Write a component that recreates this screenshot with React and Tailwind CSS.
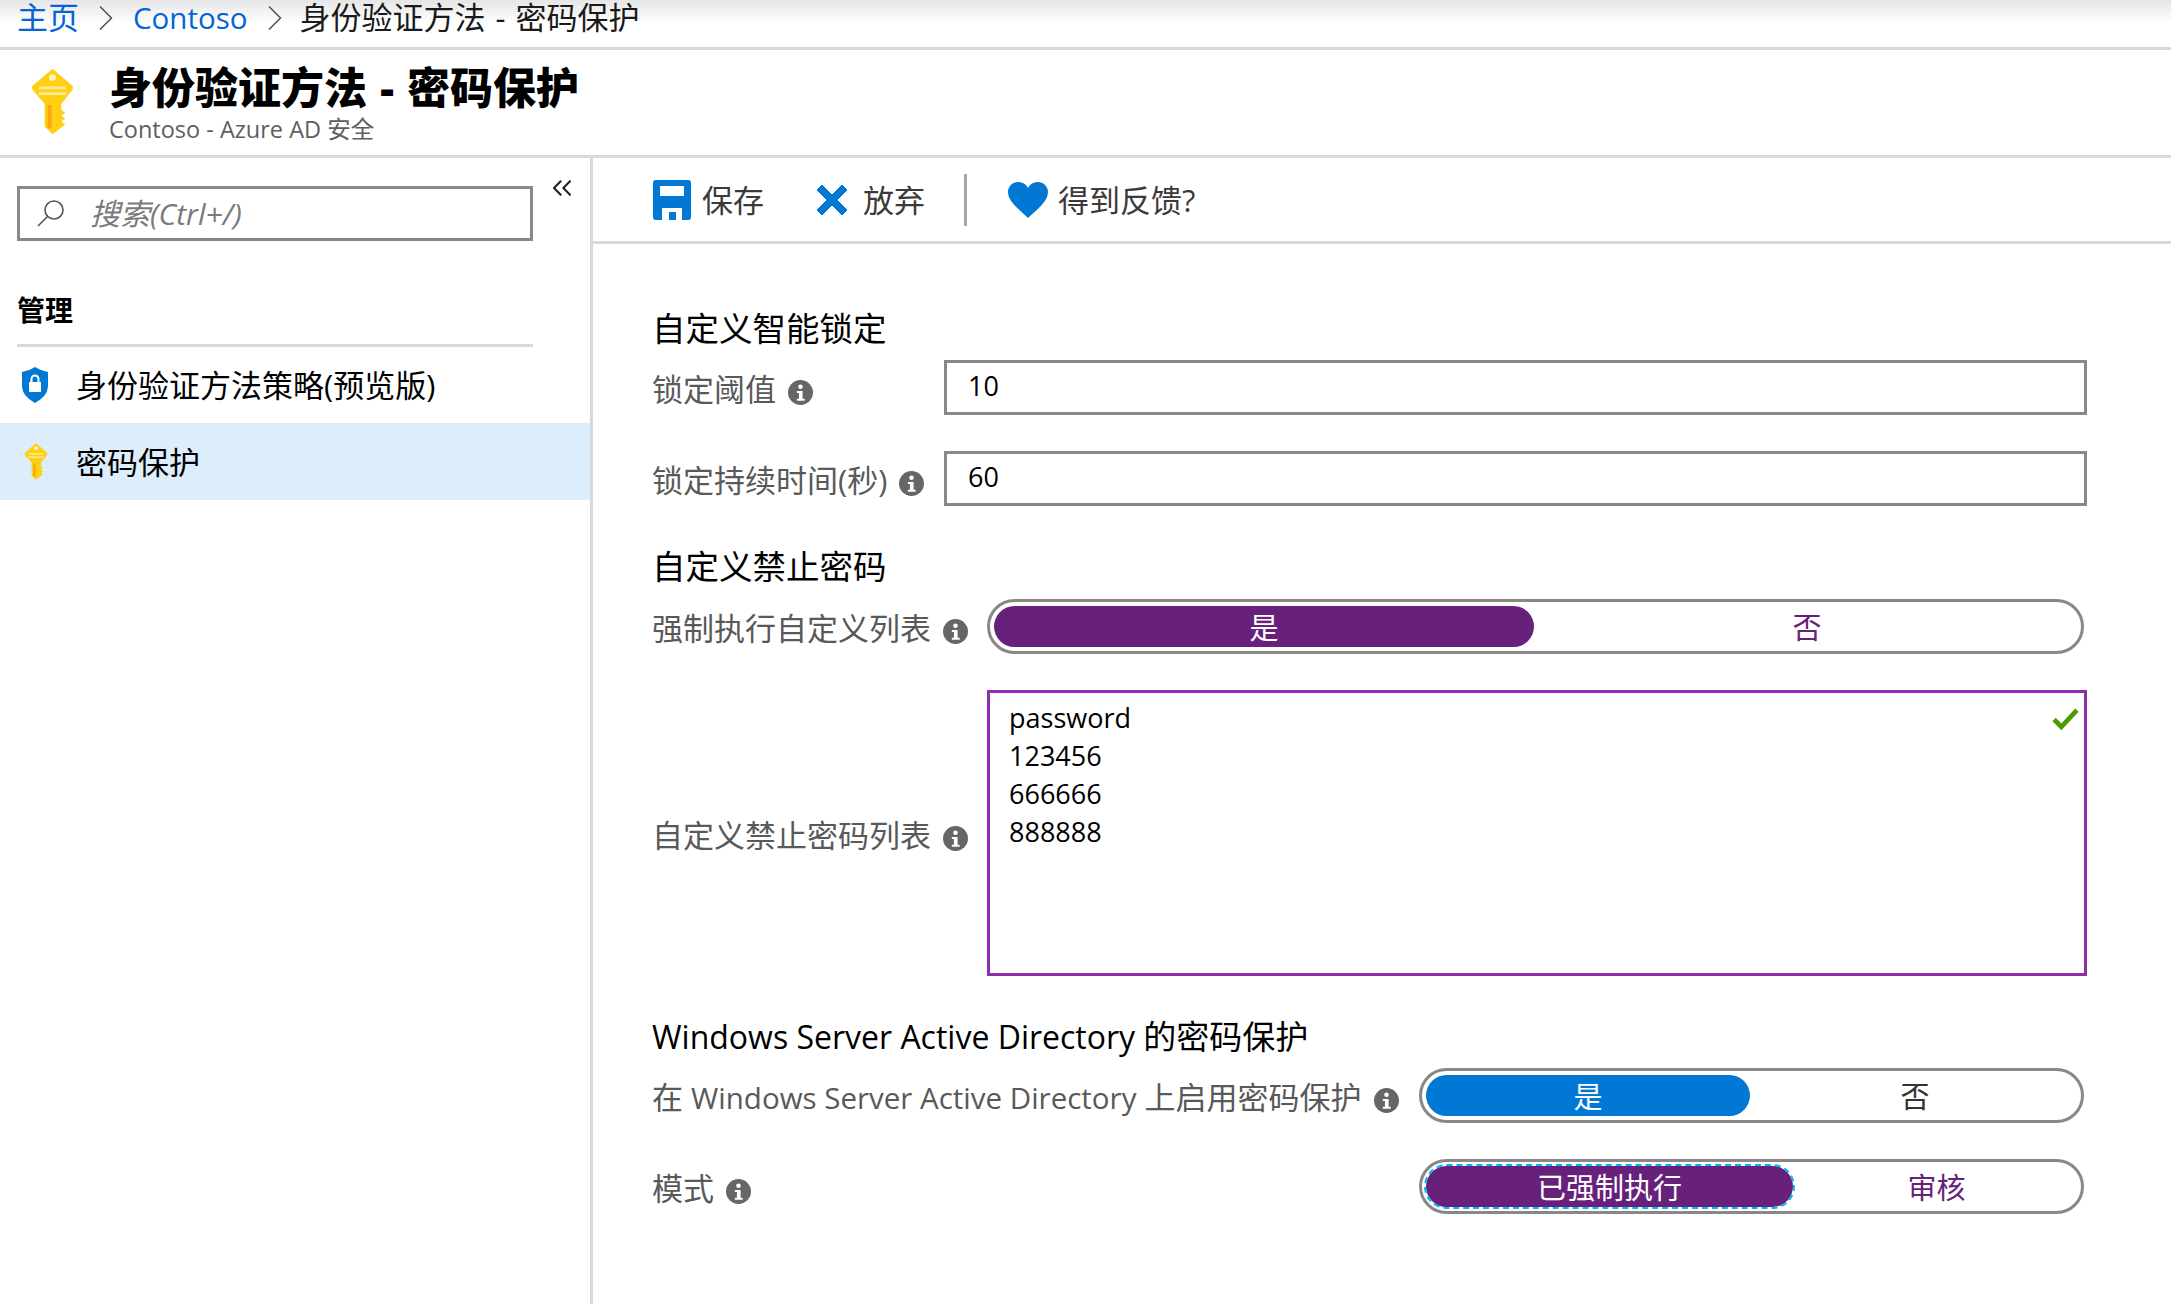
import React from "react";
import { ChevronRight, ChevronsLeft } from "lucide-react";

const KeyIcon = ({ className }) => (
  <svg viewBox="0 0 44 67" className={className}>
    <path d="M22 0 L42 17 Q44 19 42 22 L31 36 L31 42 L35 45 L31 48 L35 51 L31 54 L35 57 L22 67 L14 59 L14 36 L2 22 Q0 19 2 17 Z" fill="#ffcf14" />
    <rect x="17" y="37" width="4" height="24" fill="#f7a711" />
    <circle cx="22" cy="9" r="3.5" fill="#fff3c4" />
    <rect x="8" y="18" width="28" height="3" fill="#ffe98f" />
    <rect x="8" y="24" width="28" height="3" fill="#ffe98f" />
  </svg>
);

const ShieldIcon = ({ className }) => (
  <svg viewBox="0 0 28 36" className={className}>
    <path d="M14 0 Q20 4 27 5 L27 19 Q27 29 14 36 Q1 29 1 19 L1 5 Q8 4 14 0 Z" fill="#0078d4" />
    <rect x="8" y="15" width="12" height="10" fill="#fff" />
    <path d="M10.5 15 V12 a3.5 3.5 0 0 1 7 0 V15" fill="none" stroke="#fff" strokeWidth="2" />
  </svg>
);

const InfoIcon = () => (
  <svg viewBox="0 0 24 24" className="w-[25px] h-[25px] shrink-0 ml-3 mt-[6px]">
    <circle cx="12" cy="12" r="12" fill="#666666" />
    <circle cx="12" cy="6.5" r="2.2" fill="#fff" />
    <path d="M8.5 10.5 H14 V18 H16 V20 H8.5 V18 H10.5 V12.5 H8.5 Z" fill="#fff" />
  </svg>
);

const Heading = ({ className, children }) => (
  <div className={`h-10 flex items-center text-[33.5px] text-black ${className}`}>{children}</div>
);

const Label = ({ children, className = "" }) => (
  <div className={`flex items-center shrink-0 pt-[4px] text-[31px] text-[#595959] ${className}`}>
    <span className="whitespace-nowrap">{children}</span>
    <InfoIcon />
  </div>
);

const TextRow = ({ label, value, className }) => (
  <div className={`flex items-center ${className}`}>
    <Label className="w-[292px]">{label}</Label>
    <div className="w-[1143px] h-[55px] border-[3px] border-[#8a8886] flex items-center pl-[21px] pb-[2px] text-[27px] text-black">
      {value}
    </div>
  </div>
);

const Toggle = ({ on, off, pillColor, offColor, pillWidth, focused }) => (
  <div className="flex-1 h-[55px] border-[3px] border-[#8a8886] rounded-full p-[4px] flex items-stretch text-[29px]">
    <div
      className={`rounded-full flex items-center justify-center pt-[3px] text-white ${pillColor} ${pillWidth} ${
        focused ? "outline-2 outline-dashed outline-[#00b7f0]" : ""
      }`}
    >
      {on}
    </div>
    <div className={`flex-1 flex items-center justify-center pl-[3px] pt-[3px] ${offColor}`}>{off}</div>
  </div>
);

export default function App() {
  return (
    <div
      className="w-[2171px] h-[1304px] overflow-hidden bg-white flex flex-col"
      style={{ fontFamily: '"Open Sans", "Noto Sans CJK SC", sans-serif' }}
    >
      {/* breadcrumb */}
      <div className="h-[50px] shrink-0 border-b-[3px] border-[#d9d9d9] bg-gradient-to-b from-[#e6e6e6] via-white to-white flex items-center pl-[17px] text-[31px] leading-none pb-[12px]">
        <span className="text-[#0563d8]">主页</span>
        <ChevronRight className="w-[44px] h-[44px] mx-[5px] text-[#555]" strokeWidth={0.9} />
        <span className="text-[#0563d8] text-[29.5px]">Contoso</span>
        <ChevronRight className="w-[44px] h-[44px] ml-[5px] mr-[3px] text-[#555]" strokeWidth={0.9} />
        <span className="text-[#1a1a1a] [word-spacing:2px]">身份验证方法 - 密码保护</span>
      </div>

      {/* title */}
      <div className="h-[108px] shrink-0 border-b-[3px] border-[#d9d9d9] flex items-center pl-[31px]">
        <KeyIcon className="w-[43px] h-[67px] mb-[2px]" />
        <div className="ml-[35px] flex flex-col">
          <div className="text-[43px] leading-[50px] font-black text-black [word-spacing:2px]">身份验证方法 - 密码保护</div>
          <div className="text-[23.5px] leading-[26px] mt-[3px] text-[#605e5c]">Contoso - Azure AD 安全</div>
        </div>
      </div>

      <div className="flex flex-1 min-h-0">
        {/* sidebar */}
        <div className="w-[593px] shrink-0 border-r-[3px] border-[#d9d9d9] relative">
          <div className="ml-[17px] mt-[28px] w-[516px] h-[55px] border-[3px] border-[#8a8886] flex items-center pl-[14px] text-[30px] italic text-[#7a7a7a]">
            <svg viewBox="0 0 32 32" className="w-[32px] h-[32px]" fill="none" stroke="#555" strokeWidth="1.6">
              <circle cx="20" cy="12" r="9" />
              <path d="M13.5 18.5 L4 28" />
            </svg>
            <span className="ml-[24px]">搜索(Ctrl+/)</span>
          </div>
          <ChevronsLeft className="absolute left-[546px] top-[14px] w-[32px] h-[32px] text-[#222]" strokeWidth={1.6} />

          <div className="ml-[17px] mt-[47px] w-[516px] h-[44px] text-[28px] font-bold text-black flex items-center">管理</div>
          <div className="ml-[17px] mt-[12px] w-[516px] border-t-[3px] border-[#d9d9d9]" />

          <div className="h-[76px] flex items-center pl-[21px] text-[31px] text-black">
            <ShieldIcon className="w-[28px] h-[36px]" />
            <span className="ml-[27px]">身份验证方法策略(预览版)</span>
          </div>
          <div className="h-[77px] flex items-center pl-[24px] pt-[2px] text-[31px] text-black bg-[#dcedfc]">
            <KeyIcon className="w-[24px] h-[37px] mb-[2px]" />
            <span className="ml-[28px]">密码保护</span>
          </div>
        </div>

        {/* main */}
        <div className="flex-1 flex flex-col min-w-0">
          <div className="h-[86px] shrink-0 border-b-[3px] border-[#d9d9d9] flex items-center pl-[60px] text-[31px] text-[#3b3a39]">
            <svg viewBox="0 0 38 40" className="w-[38px] h-[40px]">
              <path
                fillRule="evenodd"
                fill="#0078d4"
                d="M3 0 H35 a3 3 0 0 1 3 3 V37 a3 3 0 0 1 -3 3 H29 V28 H9 V40 H3 a3 3 0 0 1 -3 -3 V3 a3 3 0 0 1 3 -3 Z M7 6 V16 H31 V6 Z"
              />
              <rect x="16" y="32" width="7" height="8" fill="#0078d4" />
            </svg>
            <span className="ml-[11px] pt-[2px]">保存</span>
            <svg viewBox="0 0 36 36" className="w-[36px] h-[36px] ml-[50px]">
              <path d="M3 8 L8 3 L18 13 L28 3 L33 8 L23 18 L33 28 L28 33 L18 23 L8 33 L3 28 L13 18 Z" fill="#0078d4" stroke="#0078d4" strokeWidth="1" />
            </svg>
            <span className="ml-[13px] pt-[2px]">放弃</span>
            <div className="w-[3px] h-[52px] bg-[#a6a6a6] ml-[39px]" />
            <svg viewBox="0 0 40 36" className="w-[40px] h-[36px] ml-[41px]">
              <path d="M20 36 C12 28 0 20 0 10 C0 4 5 0 10 0 C14 0 18 2 20 6 C22 2 26 0 30 0 C35 0 40 4 40 10 C40 20 28 28 20 36 Z" fill="#0078d4" />
            </svg>
            <span className="ml-[10px] pt-[2px]">得到反馈?</span>
          </div>

          <div className="pl-[59px] w-[1494px]">
            <Heading className="mt-[64px]">自定义智能锁定</Heading>
            <TextRow className="mt-[12px]" label="锁定阈值" value="10" />
            <TextRow className="mt-[36px]" label="锁定持续时间(秒)" value="60" />

            <Heading className="mt-[40px]">自定义禁止密码</Heading>
            <div className="mt-[13px] flex items-center pr-[3px]">
              <Label className="w-[335px]">强制执行自定义列表</Label>
              <Toggle on="是" off="否" pillColor="bg-[#68217a]" offColor="text-[#68217a]" pillWidth="w-[540px]" />
            </div>

            <div className="mt-[36px] flex items-center">
              <Label className="w-[335px]">自定义禁止密码列表</Label>
              <div className="relative flex-1 h-[286px] border-[3px] border-[#8c2fa8] pl-[19px] pt-[6px] text-[27px] leading-[38px] text-black">
                <div>password</div>
                <div>123456</div>
                <div>666666</div>
                <div>888888</div>
                <svg viewBox="0 0 26 22" className="absolute right-[5px] top-[15px] w-[27px] h-[23px]" fill="none" stroke="#4b9a00" strokeWidth="4.5">
                  <path d="M2 11 L9 18 L24 2" />
                </svg>
              </div>
            </div>

            <Heading className="mt-[41px]">
              <span className="text-[32px]">Windows Server Active Directory</span>
              <span className="text-[33px] ml-[8px]">的密码保护</span>
            </Heading>
            <div className="mt-[11px] flex items-center pr-[3px]">
              <Label className="w-[767px]">
                在 <span className="text-[29.5px]">Windows Server Active Directory</span> 上启用密码保护
              </Label>
              <Toggle on="是" off="否" pillColor="bg-[#0078d4]" offColor="text-[#333]" pillWidth="w-[324px]" />
            </div>
            <div className="mt-[36px] flex items-center pr-[3px]">
              <Label className="w-[767px]">模式</Label>
              <Toggle on="已强制执行" off="审核" pillColor="bg-[#68217a]" offColor="text-[#68217a]" pillWidth="w-[367px]" focused />
            </div>
          </div>
        </div>
      </div>
    </div>
  );
}
